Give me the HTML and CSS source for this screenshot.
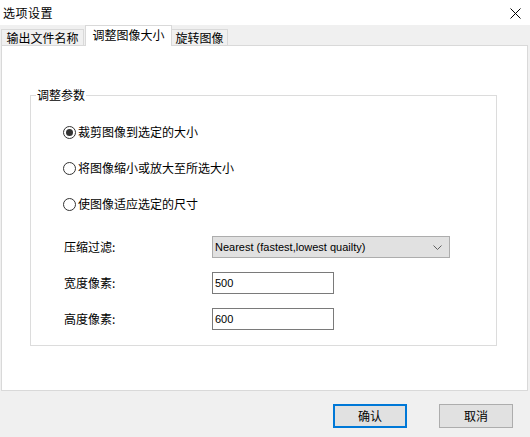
FILE: index.html
```html
<!DOCTYPE html>
<html lang="zh-CN">
<head>
<meta charset="utf-8">
<title>选项设置</title>
<link rel="stylesheet" href="styles.css">
</head>
<body>
<div class="window">
  <div class="titlebar">
    <span class="title">选项设置</span>
    <svg class="close" width="11" height="11" viewBox="0 0 11 11"><path d="M0.5 0.5 L10.5 10.5 M10.5 0.5 L0.5 10.5" stroke="#000" stroke-width="1" fill="none"/></svg>
  </div>
  <div class="tabs">
    <div class="tab tab1">输出文件名称</div>
    <div class="tab tab-active">调整图像大小</div>
    <div class="tab tab3">旋转图像</div>
  </div>
  <div class="panel">
    <fieldset class="group">
      <legend class="legend">调整参数</legend>
      <div class="radios">
        <div class="radio-row"><span class="radio checked"></span><span class="radio-label">裁剪图像到选定的大小</span></div>
        <div class="radio-row"><span class="radio"></span><span class="radio-label">将图像缩小或放大至所选大小</span></div>
        <div class="radio-row"><span class="radio"></span><span class="radio-label">使图像适应选定的尺寸</span></div>
      </div>
      <div class="form">
        <span class="flabel">压缩过滤:</span>
        <div class="select"><span class="select-text">Nearest (fastest,lowest quailty)</span>
          <svg class="chev" width="9" height="5" viewBox="0 0 9 5"><path d="M0.5 0.5 L4.5 4.5 L8.5 0.5" stroke="#606060" stroke-width="1" fill="none"/></svg>
        </div>
        <span class="flabel">宽度像素:</span>
        <div class="input">500</div>
        <span class="flabel">高度像素:</span>
        <div class="input">600</div>
      </div>
    </fieldset>
  </div>
  <div class="footer">
    <div class="btn btn-default">确认</div>
    <div class="btn">取消</div>
  </div>
</div>
</body>
</html>
```

FILE: styles.css
```css
html, body {
  margin: 0;
  padding: 0;
}
body {
  width: 530px;
  height: 437px;
  background: #f0f0f0;
  font-family: "Noto Sans CJK SC", "Microsoft YaHei", sans-serif;
  font-size: 12px;
  color: #000;
  overflow: hidden;
}
.window {
  width: 530px;
  height: 437px;
  display: flex;
  flex-direction: column;
}
.titlebar {
  height: 25px;
  background: #fff;
  display: flex;
  align-items: center;
  justify-content: space-between;
  padding: 0 9px 0 3px;
  box-sizing: border-box;
  flex: none;
}
.title {
  line-height: 14px;
  letter-spacing: 0.5px;
}
.close {
  display: block;
  margin-top: 1px;
}
.tabs {
  height: 20px;
  display: flex;
  align-items: flex-end;
  padding-left: 1px;
  flex: none;
}
.tab {
  box-sizing: border-box;
  height: 16px;
  border: 1px solid #d9d9d9;
  border-bottom: none;
  background: #f0f0f0;
  line-height: 14px;
  text-align: center;
  padding-top: 1px;
}
.tab1 {
  width: 83px;
  margin-right: 1px;
}
.tab-active {
  width: 87px;
  height: 21px;
  margin-bottom: -1px;
  background: #fff;
  position: relative;
  z-index: 1;
  padding-top: 2px;
}
.tab3 {
  width: 57px;
  margin-left: -1px;
}
.panel {
  box-sizing: border-box;
  margin-left: 1px;
  width: 527px;
  height: 346px;
  border: 1px solid #d9d9d9;
  background: #fff;
  padding-top: 42px;
  flex: none;
}
.group {
  margin: 0 0 0 28px;
  width: 467px;
  box-sizing: border-box;
  border: 1px solid #dcdcdc;
  padding: 0 0 15px 0;
  min-inline-size: 0;
}
.legend {
  margin-left: 5px;
  padding: 0 1px;
  line-height: 14px;
}
.radios {
  display: flex;
  flex-direction: column;
  gap: 20px;
  padding: 22px 0 0 32px;
}
.radio-row {
  display: flex;
  align-items: center;
  height: 16px;
}
.radio {
  box-sizing: border-box;
  width: 13px;
  height: 13px;
  border: 1px solid #333;
  border-radius: 50%;
  background: #fff;
  display: flex;
  align-items: center;
  justify-content: center;
  margin-right: 2px;
}
.radio.checked::after {
  content: "";
  width: 7px;
  height: 7px;
  border-radius: 50%;
  background: #333;
}
.radio-label {
  line-height: 16px;
}
.form {
  display: grid;
  grid-template-columns: 148px 238px;
  row-gap: 14px;
  align-items: center;
  padding: 24px 0 0 33px;
}
.flabel {
  line-height: 16px;
}
.select {
  box-sizing: border-box;
  height: 22px;
  border: 1px solid #adadad;
  background: #e1e1e1;
  display: flex;
  align-items: center;
  justify-content: space-between;
  padding: 0 7px 0 2px;
}
.select-text, .input {
  font-family: "Liberation Sans", Arial, sans-serif;
  font-size: 11px;
}
.chev {
  display: block;
}
.input {
  box-sizing: border-box;
  width: 122px;
  height: 22px;
  border: 1px solid #7a7a7a;
  background: #fff;
  display: flex;
  align-items: center;
  padding-left: 2px;
}
.footer {
  flex: 1;
  display: flex;
  justify-content: flex-end;
  gap: 32px;
  padding: 13px 17px 0 0;
  box-sizing: border-box;
}
.btn {
  box-sizing: border-box;
  width: 74px;
  height: 24px;
  border: 1px solid #adadad;
  background: #e1e1e1;
  display: flex;
  align-items: center;
  justify-content: center;
  line-height: 14px;
}
.btn-default {
  border: 2px solid #0078d7;
}
```
